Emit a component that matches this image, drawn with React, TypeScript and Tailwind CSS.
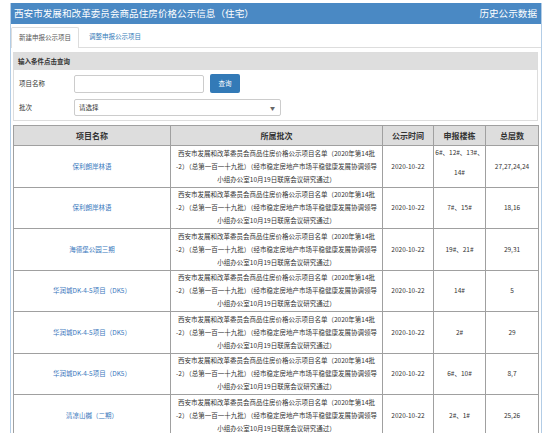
import React from 'react';

const LINE1 = '西安市发展和改革委员会商品住房价格公示项目名单（2020年第14批';
const LINE2 = '-2）（总第一百一十九批）（经市稳定房地产市场平稳健康发展协调领导';
const LINE3 = '小组办公室10月19日联席会议研究通过）';

type Row = {
  name: string;
  date: string;
  buildings: string[];
  floors: string;
};

const rows: Row[] = [
  { name: '保利朗岸林语', date: '2020-10-22', buildings: ['6#、12#、13#、', '14#'], floors: '27,27,24,24' },
  { name: '保利朗岸林语', date: '2020-10-22', buildings: ['7#、15#'], floors: '18,16' },
  { name: '海德堡公园三期', date: '2020-10-22', buildings: ['19#、21#'], floors: '29,31' },
  { name: '华润城DK-4-5项目（DK5）', date: '2020-10-22', buildings: ['14#'], floors: '5' },
  { name: '华润城DK-4-5项目（DK5）', date: '2020-10-22', buildings: ['2#'], floors: '29' },
  { name: '华润城DK-4-5项目（DK5）', date: '2020-10-22', buildings: ['6#、10#'], floors: '8,7' },
  { name: '清凉山樾（二期）', date: '2020-10-22', buildings: ['2#、1#'], floors: '25,26' },
];

const td = 'border border-[#a0a0a0] text-center p-0 leading-[13px]';

function App() {
  return (
    <div
      className="w-[550px] h-[433px] overflow-hidden bg-white text-[#333]"
      style={{ fontFamily: '"Noto Sans CJK SC", "Liberation Sans", sans-serif' }}
    >
      <div className="ml-[10px] mt-[3px] w-[532px] h-[500px] border-x border-[#b3cde6]">
        {/* Header */}
        <div className="h-[21px] bg-[#4a89c4] flex items-center justify-between pl-[3px] pr-[4px] text-white">
          <span className="text-[9.6px] leading-none">西安市发展和改革委员会商品住房价格公示信息（住宅）</span>
          <span className="text-[9.6px] leading-none">历史公示数据</span>
        </div>

        {/* Tabs */}
        <div className="pt-[3px] flex items-end border-b border-[#dddddd] h-[24px]">
          <div className="h-[21px] w-[68px] flex items-center justify-center bg-white border border-b-0 border-[#dddddd] rounded-t-[2px] text-[6.5px] text-[#555] -mb-px">
            新建申报公示项目
          </div>
          <div className="h-[21px] pl-[10px] flex items-center text-[6.5px] text-[#337ab7]">调整申报公示项目</div>
        </div>

        {/* Query panel */}
        <div className="mt-[4px] ml-[2px] mr-[3px] border border-[#dddddd]">
          <div className="h-[17px] bg-[#dedede] flex items-center pl-[4px] text-[6.5px] font-bold text-[#333]">
            输入条件点击查询
          </div>
          <div className="pt-[4px] pb-[4px]">
            <div className="flex items-center">
              <span className="w-[60px] pl-[5px] text-[6.5px]">项目名称</span>
              <div className="w-[130px] h-[18px] border border-[#cccccc] rounded-[2px] bg-white" />
              <button className="ml-[6px] w-[30px] h-[19px] bg-[#337ab7] rounded-[2px] text-white text-[6.5px] flex items-center justify-center">
                查询
              </button>
            </div>
            <div className="flex items-center mt-[6px]">
              <span className="w-[60px] pl-[5px] text-[6.5px]">批次</span>
              <div className="w-[207px] h-[17px] border border-[#cccccc] rounded-[2px] bg-white flex items-center justify-between pl-[4px] pr-[5px]">
                <span className="text-[6.5px]">请选择</span>
                <span className="text-[5px] text-[#666]">▼</span>
              </div>
            </div>
          </div>
        </div>

        {/* Table */}
        <table className="mt-[4px] ml-[2px] w-[525px] table-fixed border-collapse text-[6.5px]">
          <colgroup>
            <col className="w-[157px]" />
            <col className="w-[212px]" />
            <col className="w-[51px]" />
            <col className="w-[52px]" />
            <col className="w-[53px]" />
          </colgroup>
          <thead>
            <tr className="h-[20px] bg-[#dddddd] text-[8px]">
              <th className="border border-[#a0a0a0] font-bold">项目名称</th>
              <th className="border border-[#a0a0a0] font-bold">所属批次</th>
              <th className="border border-[#a0a0a0] font-bold">公示时间</th>
              <th className="border border-[#a0a0a0] font-bold">申报楼栋</th>
              <th className="border border-[#a0a0a0] font-bold">总层数</th>
            </tr>
          </thead>
          <tbody>
            {rows.map((r, i) => (
              <tr key={i} className="h-[41.5px]">
                <td className={`${td} text-[#3a78bd]`}>{r.name}</td>
                <td className={`${td} whitespace-nowrap overflow-hidden`}>
                  <div>{LINE1}</div>
                  <div>{LINE2}</div>
                  <div>{LINE3}</div>
                </td>
                <td className={td}>{r.date}</td>
                {r.buildings.length > 1 ? (
                  <td className={`${td} align-top whitespace-nowrap`}>
                    <div className="leading-[10px] pt-[0.5px]">{r.buildings[0]}</div>
                    <div className="leading-[10px] mt-[10px]">{r.buildings[1]}</div>
                  </td>
                ) : (
                  <td className={`${td} whitespace-nowrap`}>{r.buildings[0]}</td>
                )}
                <td className={td}>{r.floors}</td>
              </tr>
            ))}
            <tr className="h-[41.5px]">
              <td className={td} />
              <td className={td} />
              <td className={td} />
              <td className={td} />
              <td className={td} />
            </tr>
          </tbody>
        </table>
      </div>
    </div>
  );
}

export default App;
